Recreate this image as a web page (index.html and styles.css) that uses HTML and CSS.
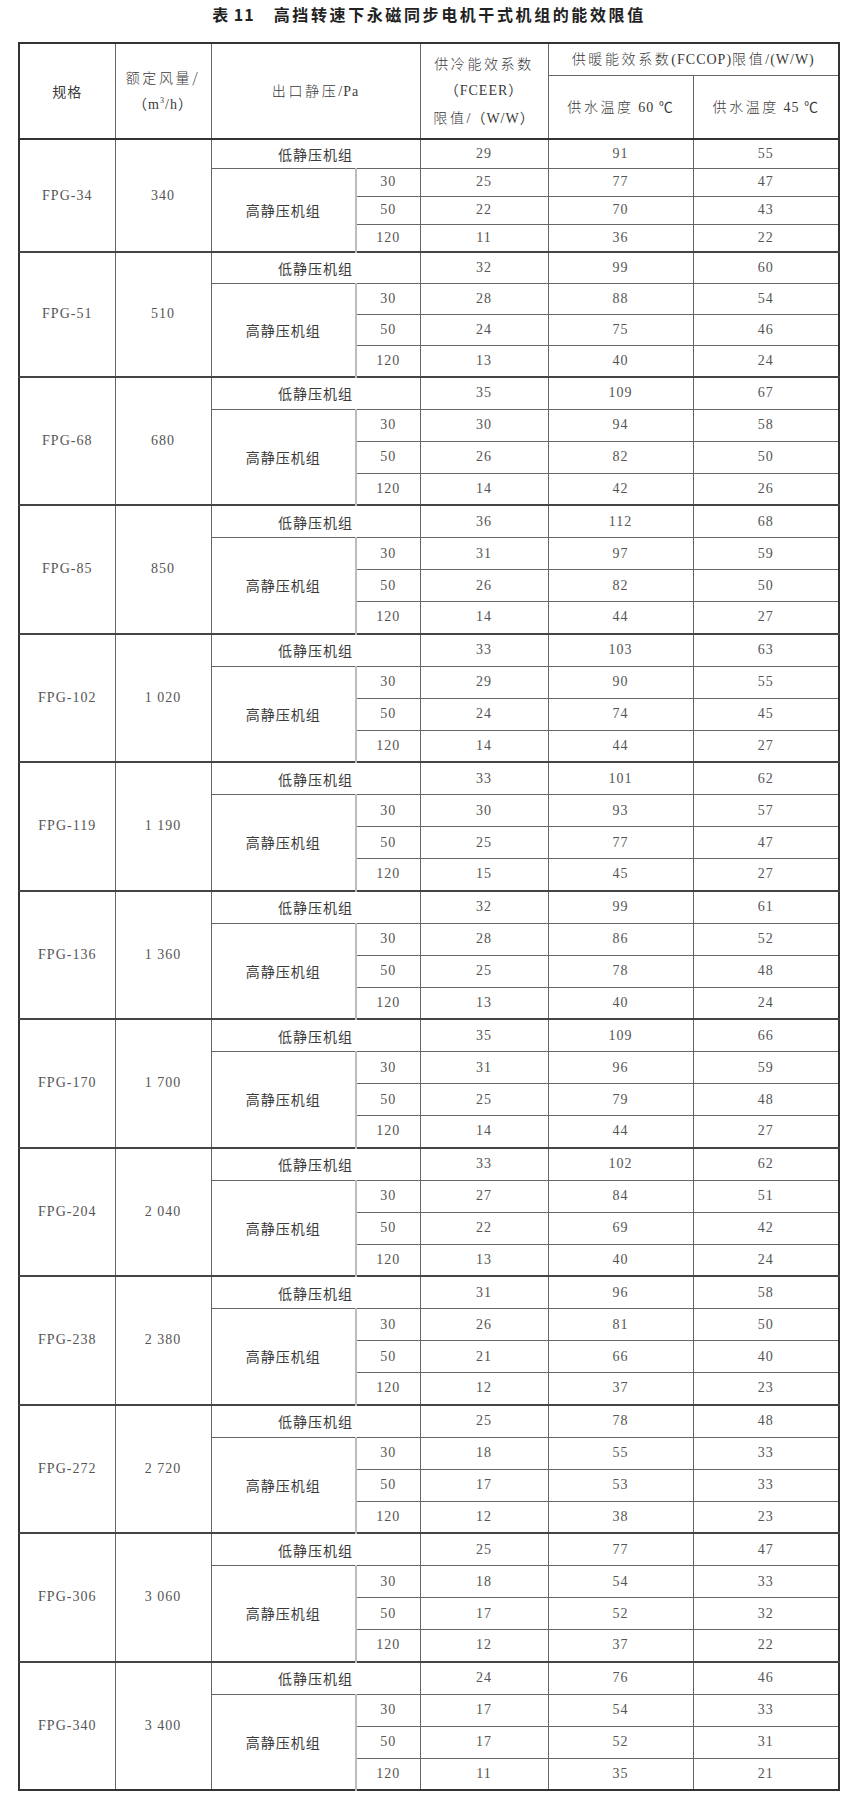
FILE: index.html
```html
<!DOCTYPE html>
<html lang="zh">
<head>
<meta charset="utf-8">
<title>表 11 高挡转速下永磁同步电机干式机组的能效限值</title>
<link rel="stylesheet" href="styles.css">
</head>
<body>
<div class="title"><span class="tno">表 11</span><span>高挡转速下永磁同步电机干式机组的能效限值</span></div>
<table class="spec">
<colgroup>
<col class="c1"><col class="c2"><col class="c3"><col class="c4"><col class="c5"><col class="c6"><col class="c7">
</colgroup>
<thead>
<tr class="h1">
<th rowspan="2" class="cjk">规格</th>
<th rowspan="2"><span class="cjk">额定风量/</span><br>（m<sup>3</sup>/h）</th>
<th rowspan="2" colspan="2"><span class="cjk">出口静压</span>/Pa</th>
<th rowspan="2"><span class="cjk">供冷能效系数</span><br>（FCEER）<br><span class="cjk">限值</span>/（W/W）</th>
<th colspan="2"><span class="cjk">供暖能效系数</span>(FCCOP)<span class="cjk">限值</span>/(W/W)</th>
</tr>
<tr class="h2">
<th><span class="cjk">供水温度</span> 60 ℃</th>
<th><span class="cjk">供水温度</span> 45 ℃</th>
</tr>
</thead>
<tbody class="grp first">
<tr class="g"><td rowspan="4">FPG-34</td><td rowspan="4">340</td><td colspan="2" class="cjk">低静压机组</td><td>29</td><td>91</td><td>55</td></tr>
<tr><td rowspan="3" class="cjk hi">高静压机组</td><td class="p">30</td><td>25</td><td>77</td><td>47</td></tr>
<tr><td class="p">50</td><td>22</td><td>70</td><td>43</td></tr>
<tr><td class="p">120</td><td>11</td><td>36</td><td>22</td></tr>
</tbody>
<tbody class="grp second">
<tr class="g"><td rowspan="4">FPG-51</td><td rowspan="4">510</td><td colspan="2" class="cjk">低静压机组</td><td>32</td><td>99</td><td>60</td></tr>
<tr><td rowspan="3" class="cjk hi">高静压机组</td><td class="p">30</td><td>28</td><td>88</td><td>54</td></tr>
<tr><td class="p">50</td><td>24</td><td>75</td><td>46</td></tr>
<tr><td class="p">120</td><td>13</td><td>40</td><td>24</td></tr>
</tbody>
<tbody class="grp">
<tr class="g"><td rowspan="4">FPG-68</td><td rowspan="4">680</td><td colspan="2" class="cjk">低静压机组</td><td>35</td><td>109</td><td>67</td></tr>
<tr><td rowspan="3" class="cjk hi">高静压机组</td><td class="p">30</td><td>30</td><td>94</td><td>58</td></tr>
<tr><td class="p">50</td><td>26</td><td>82</td><td>50</td></tr>
<tr><td class="p">120</td><td>14</td><td>42</td><td>26</td></tr>
</tbody>
<tbody class="grp">
<tr class="g"><td rowspan="4">FPG-85</td><td rowspan="4">850</td><td colspan="2" class="cjk">低静压机组</td><td>36</td><td>112</td><td>68</td></tr>
<tr><td rowspan="3" class="cjk hi">高静压机组</td><td class="p">30</td><td>31</td><td>97</td><td>59</td></tr>
<tr><td class="p">50</td><td>26</td><td>82</td><td>50</td></tr>
<tr><td class="p">120</td><td>14</td><td>44</td><td>27</td></tr>
</tbody>
<tbody class="grp">
<tr class="g"><td rowspan="4">FPG-102</td><td rowspan="4">1 020</td><td colspan="2" class="cjk">低静压机组</td><td>33</td><td>103</td><td>63</td></tr>
<tr><td rowspan="3" class="cjk hi">高静压机组</td><td class="p">30</td><td>29</td><td>90</td><td>55</td></tr>
<tr><td class="p">50</td><td>24</td><td>74</td><td>45</td></tr>
<tr><td class="p">120</td><td>14</td><td>44</td><td>27</td></tr>
</tbody>
<tbody class="grp">
<tr class="g"><td rowspan="4">FPG-119</td><td rowspan="4">1 190</td><td colspan="2" class="cjk">低静压机组</td><td>33</td><td>101</td><td>62</td></tr>
<tr><td rowspan="3" class="cjk hi">高静压机组</td><td class="p">30</td><td>30</td><td>93</td><td>57</td></tr>
<tr><td class="p">50</td><td>25</td><td>77</td><td>47</td></tr>
<tr><td class="p">120</td><td>15</td><td>45</td><td>27</td></tr>
</tbody>
<tbody class="grp">
<tr class="g"><td rowspan="4">FPG-136</td><td rowspan="4">1 360</td><td colspan="2" class="cjk">低静压机组</td><td>32</td><td>99</td><td>61</td></tr>
<tr><td rowspan="3" class="cjk hi">高静压机组</td><td class="p">30</td><td>28</td><td>86</td><td>52</td></tr>
<tr><td class="p">50</td><td>25</td><td>78</td><td>48</td></tr>
<tr><td class="p">120</td><td>13</td><td>40</td><td>24</td></tr>
</tbody>
<tbody class="grp">
<tr class="g"><td rowspan="4">FPG-170</td><td rowspan="4">1 700</td><td colspan="2" class="cjk">低静压机组</td><td>35</td><td>109</td><td>66</td></tr>
<tr><td rowspan="3" class="cjk hi">高静压机组</td><td class="p">30</td><td>31</td><td>96</td><td>59</td></tr>
<tr><td class="p">50</td><td>25</td><td>79</td><td>48</td></tr>
<tr><td class="p">120</td><td>14</td><td>44</td><td>27</td></tr>
</tbody>
<tbody class="grp">
<tr class="g"><td rowspan="4">FPG-204</td><td rowspan="4">2 040</td><td colspan="2" class="cjk">低静压机组</td><td>33</td><td>102</td><td>62</td></tr>
<tr><td rowspan="3" class="cjk hi">高静压机组</td><td class="p">30</td><td>27</td><td>84</td><td>51</td></tr>
<tr><td class="p">50</td><td>22</td><td>69</td><td>42</td></tr>
<tr><td class="p">120</td><td>13</td><td>40</td><td>24</td></tr>
</tbody>
<tbody class="grp">
<tr class="g"><td rowspan="4">FPG-238</td><td rowspan="4">2 380</td><td colspan="2" class="cjk">低静压机组</td><td>31</td><td>96</td><td>58</td></tr>
<tr><td rowspan="3" class="cjk hi">高静压机组</td><td class="p">30</td><td>26</td><td>81</td><td>50</td></tr>
<tr><td class="p">50</td><td>21</td><td>66</td><td>40</td></tr>
<tr><td class="p">120</td><td>12</td><td>37</td><td>23</td></tr>
</tbody>
<tbody class="grp">
<tr class="g"><td rowspan="4">FPG-272</td><td rowspan="4">2 720</td><td colspan="2" class="cjk">低静压机组</td><td>25</td><td>78</td><td>48</td></tr>
<tr><td rowspan="3" class="cjk hi">高静压机组</td><td class="p">30</td><td>18</td><td>55</td><td>33</td></tr>
<tr><td class="p">50</td><td>17</td><td>53</td><td>33</td></tr>
<tr><td class="p">120</td><td>12</td><td>38</td><td>23</td></tr>
</tbody>
<tbody class="grp">
<tr class="g"><td rowspan="4">FPG-306</td><td rowspan="4">3 060</td><td colspan="2" class="cjk">低静压机组</td><td>25</td><td>77</td><td>47</td></tr>
<tr><td rowspan="3" class="cjk hi">高静压机组</td><td class="p">30</td><td>18</td><td>54</td><td>33</td></tr>
<tr><td class="p">50</td><td>17</td><td>52</td><td>32</td></tr>
<tr><td class="p">120</td><td>12</td><td>37</td><td>22</td></tr>
</tbody>
<tbody class="grp">
<tr class="g"><td rowspan="4">FPG-340</td><td rowspan="4">3 400</td><td colspan="2" class="cjk">低静压机组</td><td>24</td><td>76</td><td>46</td></tr>
<tr><td rowspan="3" class="cjk hi">高静压机组</td><td class="p">30</td><td>17</td><td>54</td><td>33</td></tr>
<tr><td class="p">50</td><td>17</td><td>52</td><td>31</td></tr>
<tr><td class="p">120</td><td>11</td><td>35</td><td>21</td></tr>
</tbody>
</table>
</body>
</html>
```
FILE: styles.css
```css
html, body {
  margin: 0;
  padding: 0;
  background: #ffffff;
}

body {
  font-family: "Liberation Serif", "Noto Sans CJK SC", serif;
  color: #3a3a3a;
}

.title {
  box-sizing: border-box;
  height: 42px;
  padding-top: 4px;
  display: flex;
  justify-content: center;
  gap: 19px;
  font-family: "Noto Sans CJK SC", sans-serif;
  font-weight: 700;
  font-size: 16px;
  line-height: 20px;
  letter-spacing: 2.6px;
  color: #222;
}

.tno {
  letter-spacing: 1px;
}

.spec {
  margin-left: 18px;
  width: 822px;
  table-layout: fixed;
  border-collapse: collapse;
  border: 2px solid #333;
}

.c1 { width: 96px; }
.c2 { width: 96px; }
.c3 { width: 145px; }
.c4 { width: 64px; }
.c5 { width: 128px; }
.c6 { width: 145px; }
.c7 { width: 146px; }

.spec th,
.spec td {
  border: 1px solid #666;
  padding: 0;
  text-align: center;
  vertical-align: middle;
  font-size: 14px;
  font-weight: normal;
  letter-spacing: 1px;
  color: #555;
}

.spec th {
  line-height: 26px;
  color: #3a3a3a;
}

.spec sup {
  font-size: 8px;
  line-height: 0;
  vertical-align: 6px;
}

.h1 { height: 32px; }
.h2 { height: 64px; }

.spec thead tr.h2 th,
.spec thead tr.h1 th[rowspan] {
  border-bottom: 2px solid #333;
}

.cjk {
  font-family: "Noto Sans CJK SC", sans-serif;
  font-weight: 300;
  letter-spacing: 2.6px;
  color: #3a3a3a;
}

.spec td.cjk {
  color: #3a3a3a;
}

.spec tr.g td {
  border-top: 2px solid #444;
}

.spec tbody tr { height: 32px; }
.spec tbody tr.g { height: 32.5px; }
.spec tbody.first tr { height: 28px; }
.spec tbody.first tr.g { height: 29px; }
.spec tbody.second tr { height: 31px; }
.spec tbody.second tr.g { height: 31.5px; }

.spec td.p {
  border-left: 2px solid #bdbdbd;
}

.spec td.hi {
  border-right: 2px solid #bdbdbd;
}
```
